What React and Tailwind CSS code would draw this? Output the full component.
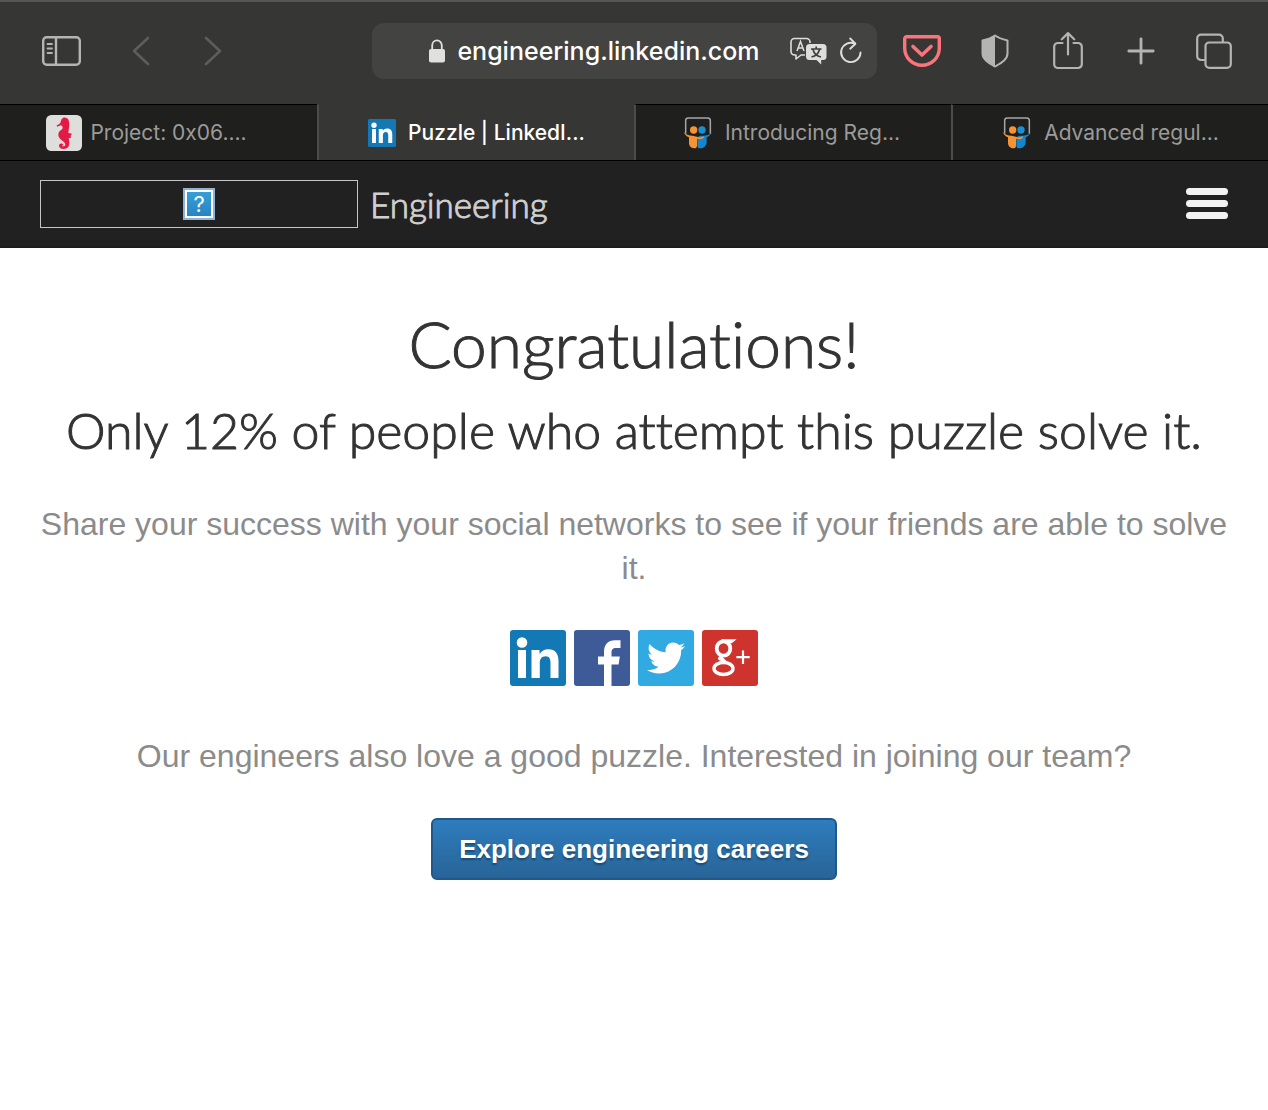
import React from "react";
import { FaTwitter } from "react-icons/fa";

function SidebarIcon() {
  return (
    <svg width="40" height="32" viewBox="0 0 40 32" fill="none" stroke="#b4b4b2" strokeWidth="2.4" aria-hidden="true">
      <rect x="2.2" y="2.2" width="36.6" height="27.6" rx="3.5" />
      <path d="M15 2v28" />
      <path d="M6.5 9h4.5M6.5 13.5h4.5M6.5 18h4.5" strokeWidth="1.8" strokeLinecap="round" />
    </svg>
  );
}

function ChevronIcon({ forward }) {
  return (
    <svg width="18" height="30" viewBox="0 0 18 30" fill="none" stroke="#5d5d5b" strokeWidth="2.6" strokeLinecap="round" strokeLinejoin="round" aria-hidden="true">
      <path d={forward ? "M2 2l14 13-14 13" : "M16 2l-14 13 14 13"} />
    </svg>
  );
}

function LockIcon() {
  return (
    <svg width="16" height="24" viewBox="0 0 16 24" aria-hidden="true">
      <path d="M3.2 11V6.500a4.800 5.200 0 0 1 9.600 0V11" fill="none" stroke="#e0e0df" strokeWidth="1.8" />
      <rect x="0" y="10" width="16" height="13.5" rx="2" fill="#e0e0df" />
    </svg>
  );
}

function TranslateIcon() {
  return (
    <svg width="38" height="28" viewBox="0 0 38 28" aria-hidden="true">
      <path d="M16 18h-4l-5 4v-4H5.500A3.500 3.500 0 0 1 2 14.500V5a3.500 3.500 0 0 1 3.500-3.500h12A3.500 3.500 0 0 1 21 5v1" fill="none" stroke="#dededd" strokeWidth="1.6" strokeLinejoin="round" />
      <path d="M8 14L11.500 4.500L15 14M9.200 11h4.600" fill="none" stroke="#dededd" strokeWidth="1.5" />
      <path d="M20.500 7h13.500a3.500 3.500 0 0 1 3.500 3.500v9a3.500 3.500 0 0 1-3.500 3.500h-1.800v4.500L27.500 23h-7a3.500 3.500 0 0 1-3.500-3.500v-9A3.500 3.500 0 0 1 20.500 7z" fill="#dededd" />
      <path d="M22 12h10.500M27.200 9.500V12M24 12.500c1 4 4 6.500 8 7.500M30.500 12.500c-1 4-4 6.500-8 7.500" fill="none" stroke="#41413f" strokeWidth="1.7" />
    </svg>
  );
}

function ReloadIcon() {
  return (
    <svg width="24" height="28" viewBox="0 0 24 28" fill="none" stroke="#dededd" strokeWidth="1.9" strokeLinecap="round" strokeLinejoin="round" aria-hidden="true">
      <path d="M21.500 15.500A9.700 9.700 0 1 1 16 6.700" />
      <path d="M11.200 1.500l5.200 5.200-5.200 5" />
    </svg>
  );
}

function PocketIcon() {
  return (
    <svg width="40" height="34" viewBox="0 0 40 34" fill="none" stroke="#fb737b" strokeLinecap="round" strokeLinejoin="round" aria-hidden="true">
      <path d="M4.500 2.800h31a1.800 1.800 0 0 1 1.800 1.800v9.700a17.300 17 0 0 1-34.600 0V4.600a1.800 1.800 0 0 1 1.800-1.800z" strokeWidth="3.4" />
      <path d="M11 12.500l9 8.500 9-8.500" strokeWidth="3.6" />
    </svg>
  );
}

function ShieldIcon() {
  return (
    <svg width="28" height="34" viewBox="0 0 28 34" aria-hidden="true">
      <path d="M14 1.500C10.500 4 6 5.400 1.500 6.500v13c0 6 6.500 9.500 12.500 13 6-3.500 12.500-7 12.500-13v-13C22 5.400 17.500 4 14 1.500z" fill="none" stroke="#b4b4b2" strokeWidth="2" strokeLinejoin="round" />
      <path d="M14 1.500C10.500 4 6 5.400 1.500 6.500v13c0 6 6.500 9.500 12.500 13z" fill="#b4b4b2" />
    </svg>
  );
}

function ShareIcon() {
  return (
    <svg width="30" height="38" viewBox="0 0 30 38" fill="none" stroke="#b4b4b2" strokeWidth="2.2" strokeLinecap="round" strokeLinejoin="round" aria-hidden="true">
      <path d="M9.500 11H5a3.800 3.800 0 0 0-3.800 3.800v17.400A3.800 3.800 0 0 0 5 36h20a3.800 3.800 0 0 0 3.800-3.800V14.800A3.800 3.800 0 0 0 25 11h-4.500" />
      <path d="M15 22.500V1.600M8.800 7.300L15 1.100l6.200 6.200" />
    </svg>
  );
}

function PlusIcon() {
  return (
    <svg width="28" height="28" viewBox="0 0 28 28" stroke="#b4b4b2" strokeWidth="2.8" strokeLinecap="round" aria-hidden="true">
      <path d="M14 1.800v24.400M1.800 14h24.400" />
    </svg>
  );
}

function TabsIcon() {
  return (
    <svg width="36" height="36" viewBox="0 0 36 36" fill="none" stroke="#b4b4b2" strokeWidth="2.2" aria-hidden="true">
      <rect x="9.5" y="9.5" width="25.3" height="25.3" rx="3.8" />
      <path d="M9 27H5a3.800 3.800 0 0 1-3.800-3.800V5.500A3.800 3.800 0 0 1 5 1.700h18a3.800 3.800 0 0 1 3.800 3.800V9" />
    </svg>
  );
}

function SeahorseIcon() {
  return (
    <svg width="36" height="36" viewBox="0 0 108 108" aria-hidden="true">
      <rect width="108" height="108" rx="16" fill="#dededd" />
      <path d="M32 31c5-2 10-4 12-10 1-6 3-10 8-13 8-1 16 2 17 12 2 10 0 18-1 26l-1 8 11 2-4 6 1 6-7 2c2 8 3 17 0 24-3 6-9 8-15 8-8 0-14-4-14-10 0-7 10-9 13-3l-4 4c3 2 9 1 10-4 0-7-7-9-12-14-7-6-11-13-8-22 3-8 12-9 12-15 0-4-3-6-6-7l-10 4z" fill="#e31b44" />
    </svg>
  );
}

function LinkedInIcon({ className }) {
  return (
    <svg className={className} viewBox="0 0 56 56" aria-hidden="true">
      <rect width="56" height="56" rx="3" fill="#1279b5" />
      <circle cx="12" cy="12.5" r="5.3" fill="#fff" />
      <path d="M8 20h8v28H8zM21.500 20h8v4c2-3.200 5-4.800 8.800-4.800 7.200 0 10.200 4.600 10.200 12V48h-8V33c0-4-1-6.800-4.800-6.800-4.200 0-5.900 2.800-5.900 7V48h-8.300z" fill="#fff" />
    </svg>
  );
}

function SlideShareIcon() {
  return (
    <svg width="30" height="32" viewBox="0 0 90 96" aria-hidden="true">
      <path d="M8 50V11c0-5 3-8 8-8h58c5 0 8 3 8 8v39" fill="none" stroke="#a4a6aa" strokeWidth="4.5" />
      <circle cx="32" cy="39" r="11" fill="#f79333" />
      <circle cx="57" cy="39" r="11" fill="#1a8fd6" />
      <path d="M87 45c-6 9-17 11-29 11-8 0-14 1-15 8v20c0 7 2 10 8 10 12 0 20-8 20-20V61c7-3 13-8 16-16z" fill="#1586cc" />
      <path d="M2 45c6 8 15 11 27 11l13 3c8 4 14 3 20-1 3 5-5 10-13 8l-7-1v21c0 5-3 8-8 8-12 0-17-9-16-21V61C10 58 5 52 2 45z" fill="#f79333" />
    </svg>
  );
}

function FacebookIcon() {
  return (
    <svg className="size-14" viewBox="0 0 56 56" aria-hidden="true">
      <rect width="56" height="56" rx="3" fill="#3e5a97" />
      <path d="M30 56V34.500h-6v-8h6V22c0-7.500 4-11.800 11-11.800h5.500V18h-4.300c-3.500 0-4.700 1.500-4.700 4.500v4h8.300l-1.200 8h-7.100V56z" fill="#fff" />
    </svg>
  );
}

function GooglePlusIcon() {
  return (
    <svg className="size-14" viewBox="0 0 56 56" aria-hidden="true">
      <rect width="56" height="56" rx="3" fill="#ce342d" />
      <ellipse cx="21.5" cy="18.5" rx="6.8" ry="7.2" fill="none" stroke="#fff" strokeWidth="3.8" />
      <ellipse cx="21.5" cy="38.5" rx="9.5" ry="6" fill="none" stroke="#fff" strokeWidth="3.4" />
      <path d="M21 10h11.500l-3 2.500H24zM19 25.500c-3.500 3-3 4 1 5l7 3" fill="#fff" stroke="#fff" strokeWidth="1.5" />
      <path d="M41 20.500V34M34.300 27.200h13.400" stroke="#fff" strokeWidth="2.2" />
    </svg>
  );
}

function ToolButton({ label, children }) {
  return (
    <button type="button" aria-label={label} className="flex h-10 w-[73px] items-center justify-center">
      {children}
    </button>
  );
}

const tabs = [
  { title: "Project: 0x06....", icon: <SeahorseIcon />, gap: "gap-2", pad: "pr-6" },
  { title: "Puzzle | LinkedI...", icon: <LinkedInIcon className="size-7" />, gap: "gap-3", active: true },
  { title: "Introducing Reg...", icon: <SlideShareIcon />, gap: "gap-3", pad: "pr-1" },
  { title: "Advanced regul...", icon: <SlideShareIcon />, gap: "gap-3" },
];

export default function App() {
  return (
    <div className="min-h-screen bg-white">
      <div className="flex h-[104px] items-center border-t-2 border-[#565655] bg-[#363634] pr-[18px] pb-1 pl-[41px]">
        <div className="flex shrink-0 items-center">
          <button type="button" aria-label="Show sidebar"><SidebarIcon /></button>
          <button type="button" aria-label="Back" className="ml-10 flex w-10 justify-center"><ChevronIcon /></button>
          <button type="button" aria-label="Forward" className="ml-8 flex w-10 justify-center"><ChevronIcon forward /></button>
        </div>
        <div className="mr-2 ml-[139px] flex h-14 flex-1 items-center rounded-xl bg-[#434341] pr-[14px] pl-7">
          <div className="flex flex-1 items-center justify-center gap-3">
            <LockIcon />
            <span className="whitespace-nowrap font-['Inter',sans-serif] text-[25px] leading-8 font-medium text-white">engineering.linkedin.com</span>
          </div>
          <button type="button" aria-label="Translate"><TranslateIcon /></button>
          <button type="button" aria-label="Reload" className="ml-3"><ReloadIcon /></button>
        </div>
        <div className="flex shrink-0 items-center">
          <ToolButton label="Save to Pocket"><PocketIcon /></ToolButton>
          <ToolButton label="Privacy report"><ShieldIcon /></ToolButton>
          <ToolButton label="Share"><ShareIcon /></ToolButton>
          <ToolButton label="New tab"><PlusIcon /></ToolButton>
          <ToolButton label="Tab overview"><TabsIcon /></ToolButton>
        </div>
      </div>

      <div role="tablist" className="grid h-[57px] grid-cols-4 border-b border-black bg-[#1f1f1d]">
        {tabs.map((t) => (
          <button
            key={t.title}
            type="button"
            role="tab"
            aria-selected={!!t.active}
            className={
              "flex items-center justify-center border-t font-['Inter',sans-serif] text-[21px] leading-7 whitespace-nowrap not-first:border-l-2 not-first:border-l-[#4c4c4a] " +
              (t.active ? "border-t-[#363634] bg-[#363634] font-medium text-white " : "border-t-black text-[#9b9b99] ") +
              t.gap + " " + (t.pad || "")
            }
          >
            {t.icon}
            <span>{t.title}</span>
          </button>
        ))}
      </div>

      <header className="flex h-[87px] items-center border-b-2 border-[#1c1c1c] bg-[#212121] px-10">
        <a href="#home" className="flex items-center gap-3">
          <span className="flex h-12 w-[318px] items-center justify-center border border-[#c6c6c6]">
            <span className="flex size-8 items-center justify-center border-2 border-[#8fb1da] bg-white p-0.5">
              <span className="flex size-6 items-center justify-center bg-linear-to-b from-[#369fd6] to-[#2784c4] font-['Inter',sans-serif] text-[22px] leading-6 text-white">?</span>
            </span>
          </span>
          <span className="font-['Lato',sans-serif] text-[35px] leading-10 font-light text-[#cfcfcf] [-webkit-text-stroke:1px_#cfcfcf]">Engineering</span>
        </a>
        <button type="button" aria-label="Menu" className="ml-auto flex w-[42px] flex-col gap-[5px]">
          <span className="h-[7px] rounded-sm bg-[#f2f2f2]" />
          <span className="h-[7px] rounded-sm bg-[#f2f2f2]" />
          <span className="h-[7px] rounded-sm bg-[#f2f2f2]" />
        </button>
      </header>

      <main className="flex flex-col items-center px-8 pt-[58px] text-center">
        <h1 className="font-['Lato',sans-serif] text-[64px] leading-[76px] font-light text-[#333] [font-variant-ligatures:none] [-webkit-text-stroke:1px_#333]">Congratulations!</h1>
        <h2 className="mt-3 font-['Lato',sans-serif] text-[50px] leading-[72px] font-light whitespace-nowrap text-[#333] [font-variant-ligatures:none] [-webkit-text-stroke:1px_#333]">
          Only 12% of people who attempt this puzzle solve it.
        </h2>
        <p className="mt-9 font-['Liberation_Sans',sans-serif] text-[32px] leading-[44px] text-[#8b8b8b]">
          Share your success with your social networks to see if your friends are able to solve it.
        </p>
        <div className="mt-10 flex gap-2">
          <a href="#linkedin" aria-label="Share on LinkedIn"><LinkedInIcon className="size-14" /></a>
          <a href="#facebook" aria-label="Share on Facebook"><FacebookIcon /></a>
          <a href="#twitter" aria-label="Share on Twitter" className="flex size-14 items-center justify-center rounded-[3px] bg-[#31aae1] text-white">
            <FaTwitter size={38} />
          </a>
          <a href="#google-plus" aria-label="Share on Google Plus"><GooglePlusIcon /></a>
        </div>
        <p className="mt-12 font-['Liberation_Sans',sans-serif] text-[32px] leading-[44px] text-[#8b8b8b]">
          Our engineers also love a good puzzle. Interested in joining our team?
        </p>
        <a
          href="#careers"
          className="mt-10 rounded-md border-2 border-[#20588a] bg-linear-to-b from-[#2e7dbd] to-[#286498] px-[26px] py-3 font-['Liberation_Sans',sans-serif] text-[26px] leading-[34px] font-bold text-white [text-shadow:0_2px_2px_rgba(0,0,0,0.35)]"
        >
          Explore engineering careers
        </a>
      </main>
    </div>
  );
}
